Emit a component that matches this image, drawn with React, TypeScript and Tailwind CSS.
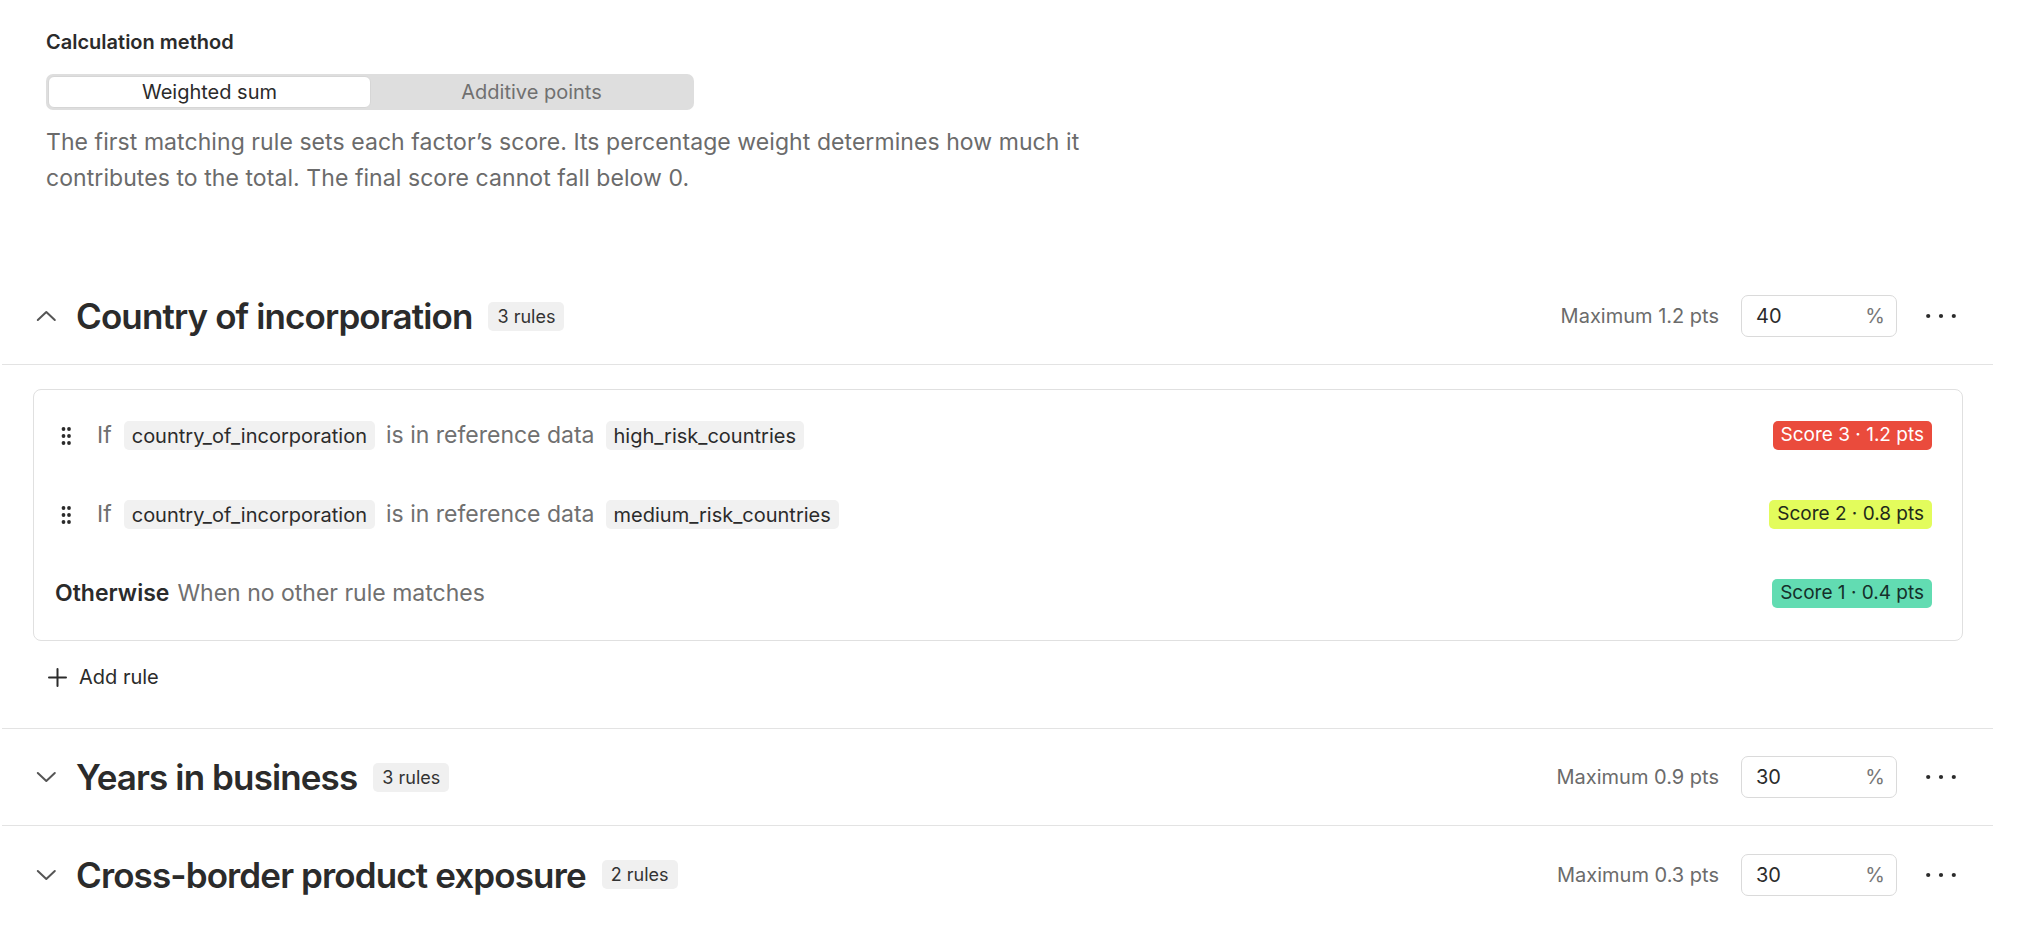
import React from "react";

function Chevron({ up }: { up?: boolean }) {
  return (
    <svg width="24" height="24" viewBox="0 0 24 24" fill="none" className="shrink-0">
      {up ? (
        <path d="M3.8 16 L12.3 8 L20.8 16" stroke="#555" strokeWidth="2" strokeLinecap="round" strokeLinejoin="round" />
      ) : (
        <path d="M3.8 8 L12.3 16 L20.8 8" stroke="#555" strokeWidth="2" strokeLinecap="round" strokeLinejoin="round" />
      )}
    </svg>
  );
}

function Dots() {
  return (
    <svg width="30" height="8" viewBox="0 0 30 8" className="shrink-0">
      <circle cx="2.2" cy="4" r="2.1" fill="#2b2b2b" />
      <circle cx="15" cy="4" r="2.1" fill="#2b2b2b" />
      <circle cx="27.8" cy="4" r="2.1" fill="#2b2b2b" />
    </svg>
  );
}

function DragHandle() {
  return (
    <svg width="22" height="22" viewBox="0 0 22 22" className="shrink-0">
      {[4, 11, 18].map((y) => (
        <React.Fragment key={y}>
          <circle cx="8.5" cy={y} r="1.9" fill="#2b2b2b" />
          <circle cx="14" cy={y} r="1.9" fill="#2b2b2b" />
        </React.Fragment>
      ))}
    </svg>
  );
}

function Plus() {
  return (
    <svg width="19" height="19" viewBox="0 0 19 19" fill="none" className="shrink-0">
      <path d="M9.5 1 V18 M1 9.5 H18" stroke="#2b2b2b" strokeWidth="2" strokeLinecap="round" />
    </svg>
  );
}

function Chip({ children }: { children: React.ReactNode }) {
  return (
    <span className="inline-flex items-center h-[29px] px-[8px] rounded-[5px] bg-[#f1f1f1] text-[20px] text-[#2b2b2b]">
      {children}
    </span>
  );
}

function Header({
  title,
  rules,
  max,
  pct,
  up,
  border,
}: {
  title: string;
  rules: string;
  max: string;
  pct: string;
  up?: boolean;
  border?: boolean;
}) {
  return (
    <div
      className={
        "h-[97px] flex items-center pl-[32px] pr-[37px] " +
        (border ? "border-b border-[#e3e3e3]" : "")
      }
    >
      <Chevron up={up} />
      <h2 className="ml-[18px] text-[35px] leading-[44px] font-semibold text-[#2b2b2b] tracking-[-0.025em]">
        {title}
      </h2>
      <span className="ml-[16px] inline-flex items-center h-[29px] px-[9px] rounded-[5px] bg-[#f0f0f0] text-[18px] text-[#333]">
        {rules}
      </span>
      <div className="ml-auto flex items-center">
        <span className="text-[20px] text-[#6b6b6b]">{max}</span>
        <div className="ml-[22px] w-[156px] h-[42px] rounded-[7px] border border-[#dadada] flex items-center justify-between pl-[14px] pr-[11px] text-[20px]">
          <span className="text-[#2b2b2b]">{pct}</span>
          <span className="text-[#777]">%</span>
        </div>
        <div className="ml-[29px]">
          <Dots />
        </div>
      </div>
    </div>
  );
}

function Badge({ children, cls }: { children: React.ReactNode; cls: string }) {
  return (
    <span className={"ml-auto inline-flex items-center h-[29px] px-[8px] rounded-[5px] text-[19px] " + cls}>
      {children}
    </span>
  );
}

function RuleRow({ data, badge, cls }: { data: string; badge: string; cls: string }) {
  return (
    <div className="h-[79px] flex items-center pl-[21px] pr-[30px]">
      <DragHandle />
      <span className="ml-[20px] text-[23px] text-[#707070]">If</span>
      <span className="ml-[12px]">
        <Chip>country_of_incorporation</Chip>
      </span>
      <span className="ml-[11px] text-[23px] text-[#707070]">is in reference data</span>
      <span className="ml-[11px]">
        <Chip>{data}</Chip>
      </span>
      <Badge cls={cls}>{badge}</Badge>
    </div>
  );
}

export default function App() {
  return (
    <div className="min-h-screen bg-white text-[#2b2b2b] [font-family:Inter,'Noto_Sans',sans-serif]">
      <div className="pl-[2px] pr-[33px]">
        <div className="pl-[44px] pt-[28px]">
          <div className="text-[20px] leading-[28px] font-semibold text-[#2b2b2b]">Calculation method</div>
          <div className="mt-[18px] flex w-[648px] h-[36px] rounded-[7px] bg-[#dedede] p-[2px]">
            <div className="flex-1 flex items-center justify-center rounded-[6px] bg-white border border-[#d6d6d6] text-[20px] text-[#2b2b2b]">
              Weighted sum
            </div>
            <div className="flex-1 flex items-center justify-center text-[20px] text-[#707070]">
              Additive points
            </div>
          </div>
          <p className="mt-[14px] max-w-[1100px] text-[23px] tracking-[0.003em] leading-[36px] text-[#6b6b6b]">
            The first matching rule sets each factor’s score. Its percentage weight determines how much it
            contributes to the total. The final score cannot fall below 0.
          </p>
        </div>

        <div className="mt-[72px]">
          <Header title="Country of incorporation" rules="3 rules" max="Maximum 1.2 pts" pct="40" up border />
          <div className="border-b border-[#e3e3e3] pt-[24px] pb-[33px]">
            <div className="ml-[31px] mr-[30px] rounded-[8px] border border-[#e0e0e0] pt-[6px] pb-[7px]">
              <RuleRow data="high_risk_countries" badge="Score 3 · 1.2 pts" cls="bg-[#ea4b3c] text-white" />
              <RuleRow data="medium_risk_countries" badge="Score 2 · 0.8 pts" cls="bg-[#e3fc5c] text-[#1f2a1a]" />
              <div className="h-[79px] flex items-center pl-[21px] pr-[30px]">
                <span className="text-[23px] font-semibold text-[#2b2b2b]">Otherwise</span>
                <span className="ml-[8px] text-[23px] text-[#707070]">When no other rule matches</span>
                <Badge cls="bg-[#62dcb2] text-[#15302a]">Score 1 · 0.4 pts</Badge>
              </div>
            </div>
            <div className="mt-[18px] h-[36px] pl-[46px] flex items-center gap-[12px] text-[20px] text-[#2b2b2b]">
              <Plus />
              <span>Add rule</span>
            </div>
          </div>
          <Header title="Years in business" rules="3 rules" max="Maximum 0.9 pts" pct="30" border />
          <Header title="Cross-border product exposure" rules="2 rules" max="Maximum 0.3 pts" pct="30" />
        </div>
      </div>
    </div>
  );
}
